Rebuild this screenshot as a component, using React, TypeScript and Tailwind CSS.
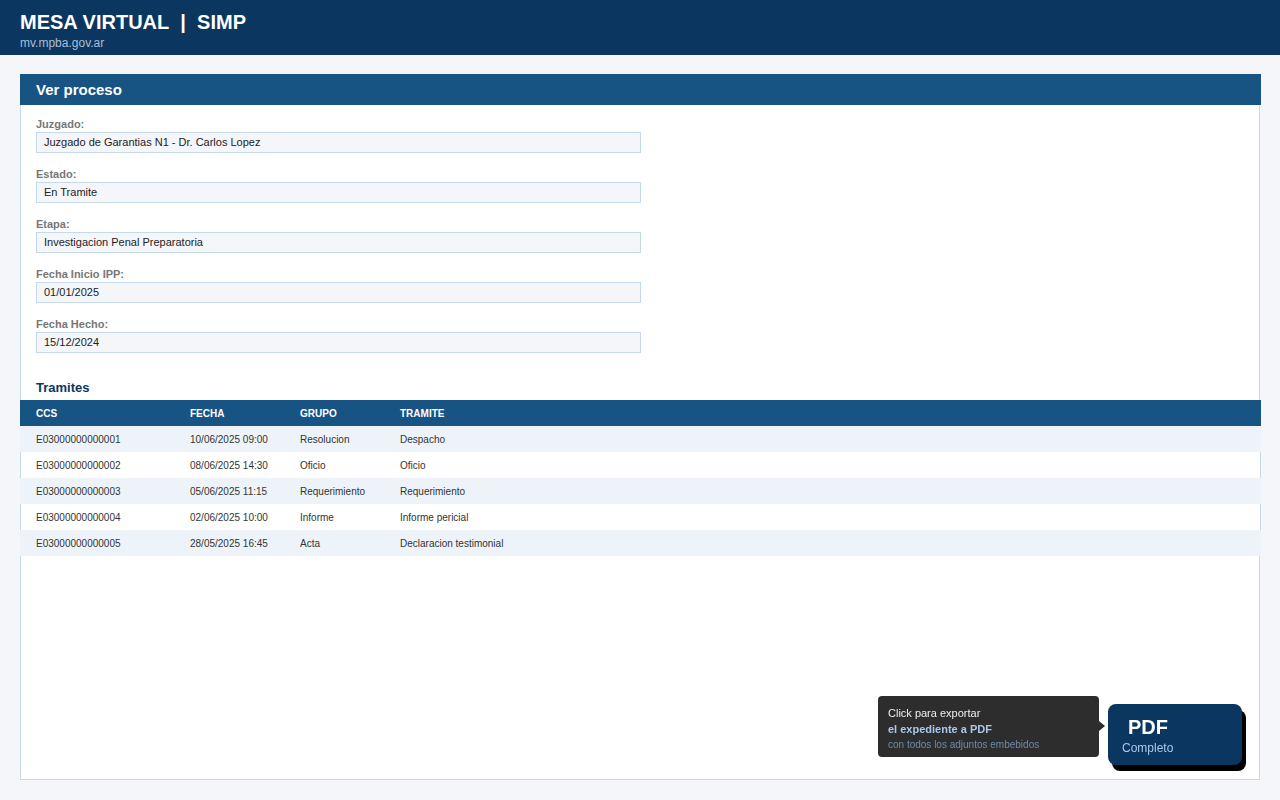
import React from 'react';

const font = { fontFamily: '"Liberation Sans", Arial, sans-serif' };

const fields = [
  { label: 'Juzgado:', value: 'Juzgado de Garantias N1 - Dr. Carlos Lopez' },
  { label: 'Estado:', value: 'En Tramite' },
  { label: 'Etapa:', value: 'Investigacion Penal Preparatoria' },
  { label: 'Fecha Inicio IPP:', value: '01/01/2025' },
  { label: 'Fecha Hecho:', value: '15/12/2024' },
];

const tramites = [
  { ccs: 'E03000000000001', fecha: '10/06/2025 09:00', grupo: 'Resolucion', tramite: 'Despacho' },
  { ccs: 'E03000000000002', fecha: '08/06/2025 14:30', grupo: 'Oficio', tramite: 'Oficio' },
  { ccs: 'E03000000000003', fecha: '05/06/2025 11:15', grupo: 'Requerimiento', tramite: 'Requerimiento' },
  { ccs: 'E03000000000004', fecha: '02/06/2025 10:00', grupo: 'Informe', tramite: 'Informe pericial' },
  { ccs: 'E03000000000005', fecha: '28/05/2025 16:45', grupo: 'Acta', tramite: 'Declaracion testimonial' },
];

export default function App() {
  return (
    <div className="min-h-screen bg-[#f4f6fa] flex flex-col" style={font}>
      {/* top bar */}
      <header className="h-[55px] bg-[#0b365f] px-5 pt-[10px]">
        <div className="text-[20px] font-bold text-white leading-[24px]">MESA VIRTUAL&nbsp; |&nbsp; SIMP</div>
        <div className="text-[12px] text-[#a9bfd6] leading-[14px] mt-[2px]">mv.mpba.gov.ar</div>
      </header>

      <main className="flex-1 flex flex-col px-5 pt-[19px] pb-5">
        <div className="flex-1 flex flex-col">
          <div className="h-[31px] w-[calc(100%+1px)] bg-[#175383] px-4 flex items-center">
            <h1 className="text-[15px] font-bold text-white leading-[18px] mt-[1px]">Ver proceso</h1>
          </div>

          <div className="flex-1 flex flex-col bg-white border-x border-b border-[#c8d9e8]">
            <div className="px-[15px] pt-[12px] flex flex-col gap-[14px]">
              {fields.map((f) => (
                <div key={f.label} className="flex flex-col">
                  <div className="text-[11px] font-bold text-[#777777] leading-[14px] mb-[1px]">{f.label}</div>
                  <div className="w-[605px] h-[21px] bg-[#f4f6fa] border border-[#c5d9ea] px-[7px] flex items-center text-[11px] text-[#222222]">
                    {f.value}
                  </div>
                </div>
              ))}
            </div>

            <h2 className="px-[15px] mt-[27px] mb-[4px] text-[13px] font-bold text-[#0b365f] leading-[16px]">Tramites</h2>

            <table className="-ml-px w-[calc(100%+3px)] border-collapse text-left">
              <thead>
                <tr className="h-[26px] bg-[#175383] text-white text-[10px] font-bold uppercase">
                  <th className="pl-4 w-[170px] font-bold">CCS</th>
                  <th className="w-[110px] font-bold">FECHA</th>
                  <th className="w-[100px] font-bold">GRUPO</th>
                  <th className="font-bold">TRAMITE</th>
                </tr>
              </thead>
              <tbody>
                {tramites.map((t, i) => (
                  <tr
                    key={t.ccs}
                    className={`h-[26px] text-[10px] text-[#333333] ${i % 2 === 0 ? 'bg-[#eef3fa]' : 'bg-white'}`}
                  >
                    <td className={`pl-4 ${i % 2 === 1 ? 'shadow-[inset_1px_0_0_#c8d9e8]' : ''}`}>{t.ccs}</td>
                    <td>{t.fecha}</td>
                    <td>{t.grupo}</td>
                    <td className={i % 2 === 1 ? 'shadow-[inset_-1px_0_0_#c8d9e8]' : ''}>{t.tramite}</td>
                  </tr>
                ))}
              </tbody>
            </table>
          </div>
        </div>
      </main>

      {/* floating export button */}
      <div className="fixed right-[38px] bottom-[35px] flex items-start">
        <div className="relative mr-[9px] w-[221px] h-[61px] bg-[#2d2d2d] rounded-[4px] px-[10px] pt-[9px] flex flex-col">
          <div className="text-[11px] text-[#eeeeee] leading-[16px]">Click para exportar</div>
          <div className="text-[11px] font-bold text-[#a9c8ec] leading-[16px]">el expediente a PDF</div>
          <div className="text-[10px] text-[#6f8bab] leading-[16px]">con todos los adjuntos embebidos</div>
          <span className="absolute right-[-6px] top-[25px] w-0 h-0 border-y-[5px] border-y-transparent border-l-[6px] border-l-[#2d2d2d]" />
        </div>
        <button className="mt-[8px] w-[134px] h-[61px] bg-[#0b365f] rounded-[8px] shadow-[4px_6px_0_#000] text-left pl-[14px] pt-[2px] flex flex-col justify-center">
          <span className="text-[20px] font-bold text-white leading-[22px] pl-[6px]">PDF</span>
          <span className="text-[12px] text-[#a9c8ec] leading-[16px] mt-[2px]">Completo</span>
        </button>
      </div>
    </div>
  );
}
